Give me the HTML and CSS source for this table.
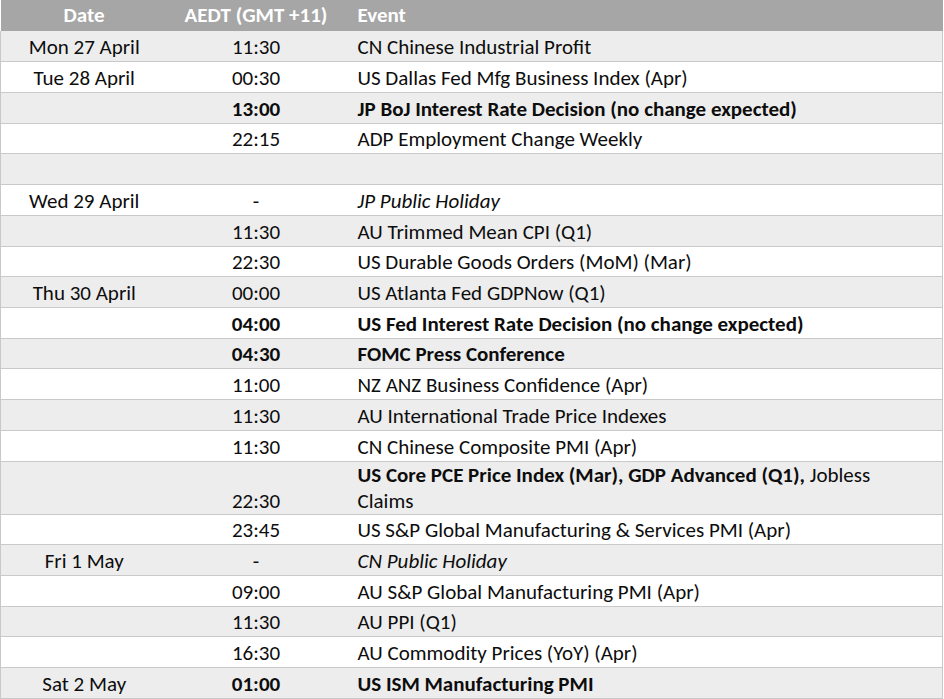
FILE: index.html
```html
<!DOCTYPE html>
<html>
<head>
<meta charset="utf-8">
<link rel="stylesheet" href="styles.css">
</head>
<body>
<table class="cal">
  <colgroup><col class="c-date"><col class="c-time"><col class="c-event"></colgroup>
  <thead>
    <tr><th class="date">Date</th><th class="time">AEDT (GMT +11)</th><th class="event">Event</th></tr>
  </thead>
  <tbody>
    <tr class="g"><td class="date">Mon 27 April</td><td class="time">11:30</td><td class="event">CN Chinese Industrial Profit</td></tr>
    <tr><td class="date">Tue 28 April</td><td class="time">00:30</td><td class="event">US Dallas Fed Mfg Business Index (Apr)</td></tr>
    <tr class="g b"><td class="date"></td><td class="time">13:00</td><td class="event">JP BoJ Interest Rate Decision (no change expected)</td></tr>
    <tr><td class="date"></td><td class="time">22:15</td><td class="event">ADP Employment Change Weekly</td></tr>
    <tr class="g"><td class="date"></td><td class="time"></td><td class="event"></td></tr>
    <tr class="i"><td class="date">Wed 29 April</td><td class="time">-</td><td class="event">JP Public Holiday</td></tr>
    <tr class="g"><td class="date"></td><td class="time">11:30</td><td class="event">AU Trimmed Mean CPI (Q1)</td></tr>
    <tr><td class="date"></td><td class="time">22:30</td><td class="event">US Durable Goods Orders (MoM) (Mar)</td></tr>
    <tr class="g"><td class="date">Thu 30 April</td><td class="time">00:00</td><td class="event">US Atlanta Fed GDPNow (Q1)</td></tr>
    <tr class="b"><td class="date"></td><td class="time">04:00</td><td class="event">US Fed Interest Rate Decision (no change expected)</td></tr>
    <tr class="g b"><td class="date"></td><td class="time">04:30</td><td class="event">FOMC Press Conference</td></tr>
    <tr><td class="date"></td><td class="time">11:00</td><td class="event">NZ ANZ Business Confidence (Apr)</td></tr>
    <tr class="g"><td class="date"></td><td class="time">11:30</td><td class="event">AU International Trade Price Indexes</td></tr>
    <tr><td class="date"></td><td class="time">11:30</td><td class="event">CN Chinese Composite PMI (Apr)</td></tr>
    <tr class="g tall"><td class="date"></td><td class="time">22:30</td><td class="event"><strong>US Core PCE Price Index (Mar), GDP Advanced (Q1),</strong> <span>Jobless</span> <span>Claims</span></td></tr>
    <tr><td class="date"></td><td class="time">23:45</td><td class="event">US S&amp;P Global Manufacturing &amp; Services PMI (Apr)</td></tr>
    <tr class="g i"><td class="date">Fri 1 May</td><td class="time">-</td><td class="event">CN Public Holiday</td></tr>
    <tr><td class="date"></td><td class="time">09:00</td><td class="event">AU S&amp;P Global Manufacturing PMI (Apr)</td></tr>
    <tr class="g"><td class="date"></td><td class="time">11:30</td><td class="event">AU PPI (Q1)</td></tr>
    <tr><td class="date"></td><td class="time">16:30</td><td class="event">AU Commodity Prices (YoY) (Apr)</td></tr>
    <tr class="g b"><td class="date">Sat 2 May</td><td class="time">01:00</td><td class="event">US ISM Manufacturing PMI</td></tr>
  </tbody>
</table>
</body>
</html>
```
FILE: styles.css
```css
html, body {
  margin: 0;
  padding: 0;
  background: #ffffff;
}
.cal {
  width: 943px;
  border-collapse: collapse;
  table-layout: fixed;
  font-family: Carlito, Lato, "Open Sans", sans-serif;
  font-size: 21px;
  line-height: 26px;
  color: #0d0d0d;
}
.c-date { width: 167px; }
.c-time { width: 177px; }
.cal th {
  background: #a6a6a6;
  color: #ffffff;
  font-weight: bold;
  height: 31px;
  padding: 0 0 3px 0;
  vertical-align: bottom;
  box-sizing: border-box;
}
.cal td {
  height: 30.73px;
  padding: 0 0 1px 0;
  vertical-align: bottom;
  box-sizing: border-box;
  border-bottom: 1px solid #c9c9c9;
  white-space: nowrap;
}
.cal tbody tr td:first-child { border-left: 1px solid #c9c9c9; }
.cal tbody tr td:last-child { border-right: 1px solid #c9c9c9; }
.cal .date, .cal .time { text-align: center; }
.cal .event { text-align: left; padding-left: 13px; }
.cal tr.g td { background: #ededed; }
.cal tr.b td.time, .cal tr.b td.event { font-weight: bold; }
.cal tr.i td.event { font-style: italic; }
.cal tr.tall td { height: 52px; white-space: normal; padding-bottom: 0; }
.cal tr.tall td.event { padding-right: 50px; }
```
